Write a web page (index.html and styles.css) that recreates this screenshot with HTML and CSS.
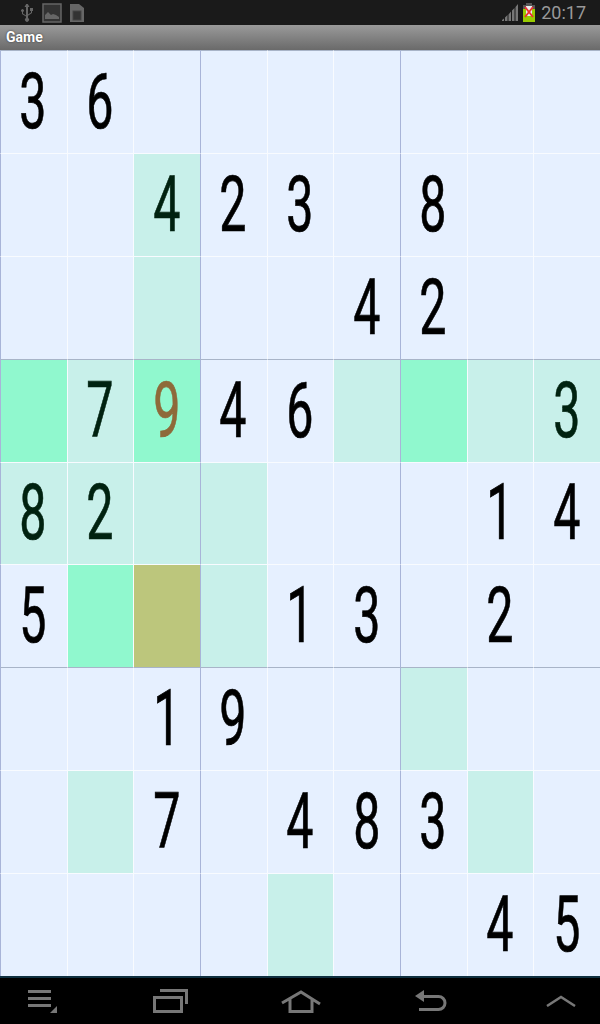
FILE: index.html
```html
<!DOCTYPE html>
<html lang="en">
<head>
    <meta charset="UTF-8">
    <meta name="viewport" content="width=device-width, initial-scale=1.0">
    <title>Game</title>
    <link rel="stylesheet" href="styles.css">
</head>
<body>
    <div class="status-bar">
        <div class="status-left">
            <svg width="14" height="18" viewBox="0 0 14 18" fill="#666"><path d="M6.200 0h1.600l1.700 3H8v7.400l3-2V7H10V4h3v3h-1v2l-4 2.700V14a2 2 0 1 1-2 0v-1.400L2 10V7.800a1.400 1.400 0 1 1 1 0V9.500l3 2V3H4.500z"/></svg>
            <svg width="20" height="20" viewBox="0 0 20 20"><rect x="1" y="1" width="18" height="18" fill="#333" stroke="#666" stroke-width="1.500"/><path d="M3 16v-4l3-3 3 3 2-1 3 1 3 2v2z" fill="#666"/></svg>
            <svg width="15" height="20" viewBox="0 0 15 20"><path d="M0 1h9l5 4v14H0z" fill="#666"/><rect x="3" y="8" width="8" height="9" fill="#333" stroke="#444"/></svg>
        </div>
        <div class="status-right">
            <svg width="17" height="17" viewBox="0 0 17 17" fill="#777"><path d="M0 17h2v-2.500L0 16zM3 17h2.500v-6L3 13.500zM6.500 17H9V7.500l-2.500 3zM10 17h2.500V4L10 6.500zM13.500 17H16V0l-2.500 3z"/></svg>
            <svg width="12" height="19" viewBox="0 0 12 19"><rect x="3" y="0" width="6" height="2" fill="#555"/><rect x="0" y="2" width="12" height="4" fill="#555"/><rect x="0" y="6" width="12" height="13" fill="#9c0"/><rect x="3" y="3" width="6" height="10" fill="#eee"/><path d="M2 4l8 10M10 4l-8 10" stroke="#e33" stroke-width="2"/></svg>
            <span class="clock">20:17</span>
        </div>
    </div>
    <div class="title-bar">Game</div>

    <div class="board">
        <div class="cell row-start"><span>3</span></div><div class="cell row-start"><span>6</span></div><div class="cell row-start"></div><div class="cell row-start"></div><div class="cell row-start"></div><div class="cell row-start"></div><div class="cell row-start"></div><div class="cell row-start"></div><div class="cell row-start"></div>
        <div class="cell"></div><div class="cell"></div><div class="cell peer"><span>4</span></div><div class="cell"><span>2</span></div><div class="cell"><span>3</span></div><div class="cell"></div><div class="cell"><span>8</span></div><div class="cell"></div><div class="cell"></div>
        <div class="cell"></div><div class="cell"></div><div class="cell peer"></div><div class="cell"></div><div class="cell"></div><div class="cell"><span>4</span></div><div class="cell"><span>2</span></div><div class="cell"></div><div class="cell"></div>
        <div class="cell row-start match"></div><div class="cell row-start peer"><span>7</span></div><div class="cell row-start match picked"><span>9</span></div><div class="cell row-start"><span>4</span></div><div class="cell row-start"><span>6</span></div><div class="cell row-start peer"></div><div class="cell row-start match"></div><div class="cell row-start peer"></div><div class="cell row-start peer"><span>3</span></div>
        <div class="cell peer"><span>8</span></div><div class="cell peer"><span>2</span></div><div class="cell peer"></div><div class="cell peer"></div><div class="cell"></div><div class="cell"></div><div class="cell"></div><div class="cell"><span>1</span></div><div class="cell"><span>4</span></div>
        <div class="cell"><span>5</span></div><div class="cell match"></div><div class="cell clash"></div><div class="cell peer"></div><div class="cell"><span>1</span></div><div class="cell"><span>3</span></div><div class="cell"></div><div class="cell"><span>2</span></div><div class="cell"></div>
        <div class="cell row-start"></div><div class="cell row-start"></div><div class="cell row-start"><span>1</span></div><div class="cell row-start"><span>9</span></div><div class="cell row-start"></div><div class="cell row-start"></div><div class="cell row-start peer"></div><div class="cell row-start"></div><div class="cell row-start"></div>
        <div class="cell"></div><div class="cell peer"></div><div class="cell"><span>7</span></div><div class="cell"></div><div class="cell"><span>4</span></div><div class="cell"><span>8</span></div><div class="cell"><span>3</span></div><div class="cell peer"></div><div class="cell"></div>
        <div class="cell"></div><div class="cell"></div><div class="cell"></div><div class="cell"></div><div class="cell peer"></div><div class="cell"></div><div class="cell"></div><div class="cell"><span>4</span></div><div class="cell"><span>5</span></div>
    </div>

    <div class="nav-bar">
        <svg class="nav-menu" width="30" height="23" viewBox="0 0 30 23" fill="#777"><rect x="0" y="0" width="23" height="3"/><rect x="0" y="7" width="23" height="3"/><rect x="0" y="14" width="23" height="3"/><path d="M29 16v7h-7z"/></svg>
        <svg class="nav-recent" width="35" height="24" viewBox="0 0 35 24" fill="none" stroke="#777" stroke-width="3"><rect x="1.500" y="8.500" width="27" height="14"/><path d="M7 1.500h26.500V15"/></svg>
        <svg class="nav-home" width="40" height="23" viewBox="0 0 40 23" fill="none" stroke="#777" stroke-width="3"><path d="M1 13L20 2l19 12M9 9v12.500h22V9"/></svg>
        <svg class="nav-back" width="32" height="22" viewBox="0 0 32 22" fill="none" stroke="#777" stroke-width="3"><path d="M9 6.500h14.500a6.500 6.500 0 0 1 0 13H4"/><path d="M0 6l9-6v12z" fill="#777" stroke="none"/></svg>
        <svg class="nav-up" width="30" height="12" viewBox="0 0 30 12" fill="none" stroke="#777" stroke-width="2.500"><path d="M1 11L15 2l14 9"/></svg>
    </div>
</body>
</html>
```

FILE: styles.css
```css
html, body {
    margin: 0;
    padding: 0;
}
body {
    width: 600px;
    height: 1024px;
    overflow: hidden;
    display: flex;
    flex-direction: column;
    background-color: #000;
    font-family: Roboto, sans-serif;
}
.status-bar {
    height: 25px;
    flex: none;
    display: flex;
    justify-content: space-between;
    align-items: center;
    padding: 0 14px 0 20px;
    background-color: #1a1a1a;
}
.status-left, .status-right {
    display: flex;
    align-items: center;
    gap: 8px;
}
.status-right {
    gap: 4px;
}
.clock {
    color: #999;
    font-size: 18px;
    margin-left: 2px;
}
.title-bar {
    height: 25px;
    flex: none;
    padding: 4px 0 0 6px;
    box-sizing: border-box;
    background: linear-gradient(#9a9a9a, #6a6a6a);
    color: #fff;
    font-size: 14px;
    font-weight: 700;
    line-height: 16px;
    text-shadow: 0 0 2px #333;
}
.board {
    height: 928px;
    flex: none;
    box-sizing: border-box;
    display: grid;
    grid-template-columns: repeat(9, 1fr);
    grid-template-rows: repeat(9, 1fr);
    border-bottom: 2px solid #0f3040;
    background-color: #e6f0ff;
}
.cell {
    display: flex;
    justify-content: center;
    align-items: center;
    overflow: hidden;
    box-sizing: border-box;
    border-left: 1px solid #f8fbff;
    border-top: 1px solid #f8fbff;
    background-color: #e6f0ff;
    color: #000;
    font-size: 78px;
    line-height: 1;
}
.cell span {
    display: inline-block;
    margin-left: -1px;
    transform: scaleX(0.62);
    -webkit-text-stroke: 0.7px currentColor;
}
.cell:nth-child(3n+1) {
    border-left-color: #a8b4d8;
}
.row-start {
    border-top-color: #a8b4c8;
}
.peer {
    background-color: #c8f0ea;
    color: #002210;
}
.match {
    background-color: #90f8ce;
}
.clash {
    background-color: #bcc67c;
}
.picked {
    color: #8e6a3a;
}
.nav-bar {
    flex: 1;
    display: flex;
    align-items: center;
    padding-left: 28px;
    background-color: #000;
}
.nav-recent {
    margin-left: 95px;
}
.nav-home {
    margin-left: 93px;
}
.nav-back {
    margin-left: 94px;
}
.nav-up {
    margin-left: 99px;
}
```
